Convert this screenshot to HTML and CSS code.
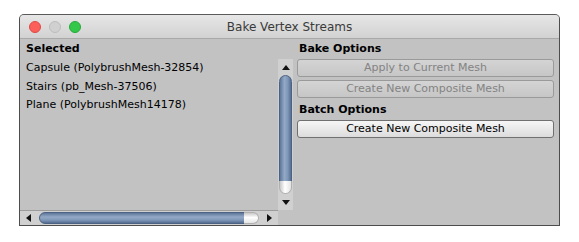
FILE: index.html
```html
<!DOCTYPE html>
<html>
<head>
<meta charset="utf-8">
<link rel="stylesheet" href="styles.css">
</head>
<body>
<div class="window">
  <div class="titlebar">
    <div class="lights">
      <span class="light red"></span>
      <span class="light gray"></span>
      <span class="light green"></span>
    </div>
    <div class="title">Bake Vertex Streams</div>
  </div>
  <div class="content">
    <div class="left">
      <div class="header">Selected</div>
      <div class="listwrap">
        <div class="list">
          <div class="item">Capsule (PolybrushMesh-32854)</div>
          <div class="item">Stairs (pb_Mesh-37506)</div>
          <div class="item">Plane (PolybrushMesh14178)</div>
        </div>
        <div class="vscroll">
          <div class="arrow up"></div>
          <div class="vtrack"><div class="vthumb"></div><div class="vcap"></div></div>
          <div class="arrow down"></div>
        </div>
      </div>
      <div class="hscroll">
        <div class="harrow left-a"></div>
        <div class="htrack"><div class="hthumb"></div><div class="hcap"></div></div>
        <div class="harrow right-a"></div>
      </div>
    </div>
    <div class="right">
      <div class="header">Bake Options</div>
      <div class="btn disabled">Apply to Current Mesh</div>
      <div class="btn disabled">Create New Composite Mesh</div>
      <div class="header sub">Batch Options</div>
      <div class="btn">Create New Composite Mesh</div>
    </div>
  </div>
</div>
</body>
</html>
```
FILE: styles.css
```css
html, body {
  margin: 0;
  padding: 0;
  background: #ffffff;
}
body {
  padding: 14px 0 0 19px;
  font-family: "DejaVu Sans", "Liberation Sans", sans-serif;
  font-size: 11px;
  color: #000;
}
.window {
  box-sizing: border-box;
  width: 541px;
  height: 212px;
  border: 1px solid #4d4d4d;
  border-top-color: #5a5a5a;
  border-radius: 5px 5px 0 0;
  background: #c2c2c2;
  display: flex;
  flex-direction: column;
  overflow: hidden;
}
.titlebar {
  height: 23px;
  flex: none;
  background: linear-gradient(#e6e6e6, #d2d2d2);
  border-bottom: 1px solid #a9a9a9;
  display: flex;
  align-items: center;
  position: relative;
}
.lights {
  display: flex;
  gap: 8px;
  padding-left: 9px;
}
.light {
  width: 12px;
  height: 12px;
  border-radius: 50%;
  box-sizing: border-box;
}
.red { background: #fc605b; border: 1px solid #de4a44; }
.gray { background: #d0d0d0; border: 1px solid #bdbdbd; }
.green { background: #34c84a; border: 1px solid #27a83a; }
.title {
  position: absolute;
  left: 0;
  right: 0;
  text-align: center;
  font-size: 12px;
  color: #3a3a3a;
  font-family: "DejaVu Sans", sans-serif;
}
.content {
  flex: 1;
  display: flex;
  min-height: 0;
}
.left {
  width: 273px;
  display: flex;
  flex-direction: column;
}
.header {
  height: 19px;
  line-height: 19px;
  font-weight: bold;
  padding-left: 6px;
  flex: none;
}
.listwrap {
  flex: 1;
  display: flex;
  min-height: 0;
}
.list {
  flex: 1;
  padding: 1px 0 0 6px;
}
.item {
  height: 18.5px;
  line-height: 18.5px;
  white-space: nowrap;
}
.vscroll {
  width: 15px;
  display: flex;
  flex-direction: column;
  background: #d0d0d0;
  margin-top: 1px;
}
.arrow {
  height: 16px;
  flex: none;
  display: flex;
  align-items: center;
  justify-content: center;
}
.arrow::before {
  content: "";
  border-left: 4px solid transparent;
  border-right: 4px solid transparent;
}
.up::before { border-bottom: 5px solid #111; }
.down::before { border-top: 5px solid #111; }
.vtrack {
  flex: 1;
  display: flex;
  flex-direction: column;
  padding: 0 1px;
}
.vthumb {
  flex: 1;
  border-radius: 7px;
  background: linear-gradient(90deg, #5e769a, #93a9c6 40%, #7f97b8 70%, #566e92);
  border: 1px solid #4c6283;
}
.vcap {
  height: 12px;
  margin-top: -7px;
  border-radius: 0 0 7px 7px;
  background: linear-gradient(90deg, #c8c8c8, #ffffff 45%, #e4e4e4);
  border: 1px solid #b0b0b0;
  border-top: none;
}
.hscroll {
  height: 15px;
  flex: none;
  display: flex;
  background: #d0d0d0;
  border-top: 1px solid #9c9c9c;
  box-sizing: border-box;
  margin-right: 15px;
}
.harrow {
  width: 17px;
  flex: none;
  display: flex;
  align-items: center;
  justify-content: center;
}
.harrow::before {
  content: "";
  border-top: 4px solid transparent;
  border-bottom: 4px solid transparent;
}
.left-a::before { border-right: 5px solid #111; }
.right-a::before { border-left: 5px solid #111; }
.htrack {
  flex: 1;
  display: flex;
  padding: 1px 2px 1px 2px;
}
.hthumb {
  flex: 1;
  border-radius: 7px;
  background: linear-gradient(#5e769a, #93a9c6 40%, #7f97b8 70%, #566e92);
  border: 1px solid #4c6283;
}
.hcap {
  width: 14px;
  margin-left: -7px;
  border-radius: 0 7px 7px 0;
  background: linear-gradient(#c8c8c8, #ffffff 45%, #e4e4e4);
  border: 1px solid #b0b0b0;
  border-left: none;
}
.right {
  flex: 1;
  padding: 0 5px 0 4px;
  display: flex;
  flex-direction: column;
}
.right .header {
  padding-left: 2px;
  height: 20px;
  line-height: 19px;
}
.right .sub {
  height: 18px;
  line-height: 18px;
  margin-bottom: 1px;
}
.btn {
  height: 18px;
  box-sizing: border-box;
  margin-bottom: 3px;
  border: 1px solid #707070;
  border-radius: 3px;
  background: linear-gradient(#f6f6f6, #dcdcdc);
  text-align: center;
  line-height: 16px;
  white-space: nowrap;
}
.btn.disabled {
  border-color: #9a9a9a;
  background: linear-gradient(#d4d4d4, #c6c6c6);
  color: #838383;
}
```
